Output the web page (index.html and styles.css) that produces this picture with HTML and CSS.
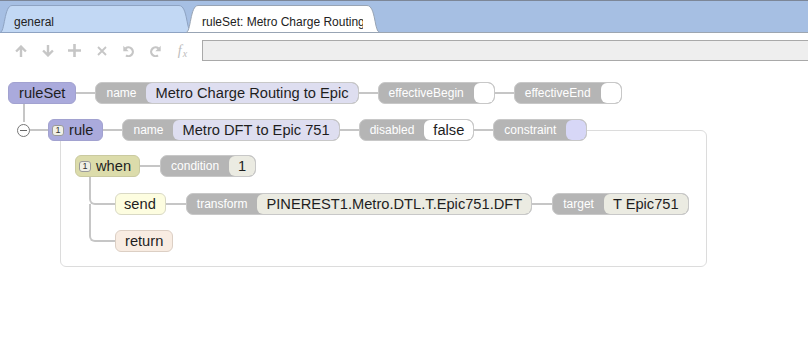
FILE: index.html
```html
<!DOCTYPE html>
<html>
<head>
<meta charset="utf-8">
<link rel="stylesheet" href="styles.css">
</head>
<body>
<div class="tabbar">
  <div class="tab">
    <svg class="tab-bg" viewBox="0 0 192 27" preserveAspectRatio="none"><path d="M0 27.5 C5 27.5 4 0.5 12 0.5 H179 C188 0.5 186 27.5 192 27.5 Z" fill="#c2d8f4" stroke="#8ea3c2" stroke-width="1" vector-effect="non-scaling-stroke"/></svg>
    <span class="tab-text">general</span>
  </div>
  <div class="tab active">
    <svg class="tab-bg" viewBox="0 0 194 27" preserveAspectRatio="none"><path d="M0 27.5 C5 27.5 4 0.5 12 0.5 H181 C190 0.5 188 27.5 194 27.5 Z" fill="#ffffff" stroke="#98a4b4" stroke-width="1" vector-effect="non-scaling-stroke"/></svg>
    <span class="tab-text">ruleSet: Metro Charge Routing to Epic</span>
  </div>
</div>

<div class="toolbar">
  <span class="tool"><svg width="12" height="12" viewBox="0 0 12 12"><path d="M6 12V1.6M1.1 6.5L6 1.6l4.9 4.9" fill="none" stroke="#c6c6c6" stroke-width="2.4"/></svg></span>
  <span class="tool"><svg width="12" height="12" viewBox="0 0 12 12"><path d="M6 0V10.4M1.1 5.5L6 10.4l4.9-4.9" fill="none" stroke="#c6c6c6" stroke-width="2.4"/></svg></span>
  <span class="tool"><svg width="13" height="13" viewBox="0 0 13 13"><path d="M6.5 0v13M0 6.5h13" fill="none" stroke="#c6c6c6" stroke-width="2.6"/></svg></span>
  <span class="tool"><svg width="10" height="10" viewBox="0 0 10 10"><path d="M1 1l8 8M9 1l-8 8" fill="none" stroke="#c6c6c6" stroke-width="1.8"/></svg></span>
  <span class="tool"><svg width="11" height="12" viewBox="0 0 11 12"><path d="M2.6 3.4A4.4 4.4 0 1 1 3 10.4" fill="none" stroke="#c6c6c6" stroke-width="2.2"/><path d="M0.3 0.8V6.2H5.7Z" fill="#c6c6c6"/></svg></span>
  <span class="tool"><svg width="11" height="12" viewBox="0 0 11 12"><g transform="translate(11 0) scale(-1 1)"><path d="M2.6 3.4A4.4 4.4 0 1 1 3 10.4" fill="none" stroke="#c6c6c6" stroke-width="2.2"/><path d="M0.3 0.8V6.2H5.7Z" fill="#c6c6c6"/></g></svg></span>
  <span class="tool fx"><i>f</i><span class="sub">x</span></span>
  <div class="formula"></div>
</div>

<div class="tree">
  <div class="row">
    <div class="node set">ruleSet</div>
    <span class="conn"></span>
    <div class="prop"><span class="lbl">name</span><span class="val lav">Metro Charge Routing to Epic</span></div>
    <span class="conn"></span>
    <div class="prop"><span class="lbl">effectiveBegin</span><span class="val empty"></span></div>
    <span class="conn"></span>
    <div class="prop"><span class="lbl">effectiveEnd</span><span class="val empty"></span></div>
  </div>

  <div class="row rule-row">
    <span class="collapse"></span>
    <span class="conn short"></span>
    <div class="node set badged"><span class="badge">1</span>rule</div>
    <span class="conn"></span>
    <div class="prop"><span class="lbl">name</span><span class="val lav">Metro DFT to Epic 751</span></div>
    <span class="conn"></span>
    <div class="prop"><span class="lbl">disabled</span><span class="val white">false</span></div>
    <span class="conn"></span>
    <div class="prop"><span class="lbl">constraint</span><span class="val empty lav2"></span></div>
  </div>

  <div class="rule-body">
    <div class="row">
      <div class="node when badged"><span class="badge">1</span>when</div>
      <span class="conn wide"></span>
      <div class="prop"><span class="lbl">condition</span><span class="val beige">1</span></div>
    </div>
    <div class="children">
      <div class="row child">
        <div class="node send">send</div>
        <span class="conn wide"></span>
        <div class="prop"><span class="lbl">transform</span><span class="val beige">PINEREST1.Metro.DTL.T.Epic751.DFT</span></div>
        <span class="conn wide"></span>
        <div class="prop"><span class="lbl">target</span><span class="val beige">T Epic751</span></div>
      </div>
      <div class="row child">
        <div class="node ret">return</div>
      </div>
    </div>
  </div>
</div>
</body>
</html>
```

FILE: styles.css
```css
body {
  margin: 0;
  font-family: "Liberation Sans", Arial, sans-serif;
  color: #1e1e1e;
  background: #fff;
}

.tabbar {
  height: 31px;
  border-top: 1px solid #7c8697;
  border-bottom: 1px solid #9da6b1;
  background: #a6bfe3;
  display: flex;
  align-items: flex-end;
}

.tab {
  position: relative;
  box-sizing: border-box;
  width: 192px;
  height: 27px;
  padding: 10px 0 0 14px;
  font-size: 12px;
  line-height: 14px;
  color: #222;
}

.tab.active {
  width: 194px;
  margin-left: -6px;
  padding-left: 16px;
}

.tab-bg {
  position: absolute;
  left: 0;
  top: 0;
  width: 100%;
  height: 100%;
  overflow: visible;
}

.tab-text {
  position: relative;
  display: block;
  white-space: nowrap;
  overflow: hidden;
}

.tab.active .tab-text {
  width: 161px;
}

.toolbar {
  display: flex;
  align-items: center;
  height: 21px;
  padding: 7px 0 0 7px;
}

.tool {
  width: 27px;
  display: flex;
  justify-content: center;
  align-items: center;
}

.fx {
  font-family: "Liberation Serif", "Times New Roman", serif;
  color: #bdbdbd;
  font-size: 14px;
}

.fx .sub {
  font-size: 10px;
  font-style: italic;
  margin-top: 5px;
  margin-left: 1px;
}

.formula {
  flex: 1;
  height: 19px;
  margin-left: 6px;
  border: 1px solid #a9a9a9;
  border-right: 0;
  background: #eeeeee;
}

.tree {
  padding: 21px 0 0 8px;
}

.row {
  display: flex;
  align-items: center;
  height: 22px;
}

.conn {
  flex: none;
  width: 19px;
  height: 2px;
  background: #c6c6c6;
}

.conn.short {
  width: 18px;
}

.conn.wide {
  width: 20px;
}

.node {
  box-sizing: border-box;
  height: 22px;
  border: 1px solid;
  border-radius: 6px;
  display: flex;
  align-items: center;
  padding: 0 10px;
  font-size: 14.667px;
  white-space: nowrap;
}

.node.badged {
  padding: 0 9px 0 3px;
}

.set {
  background: #aaaadc;
  border-color: #a2a2d0;
}

.when {
  background: #dcdcab;
  border-color: #cacaa0;
}

.node.when {
  padding-right: 8px;
}

.send {
  background: #fdfde0;
  border-color: #d9d9c4;
  padding: 0 9px 0 8px;
}

.ret {
  background: #f8ece2;
  border-color: #dccfc4;
  padding: 0 9px;
}

.badge {
  box-sizing: border-box;
  width: 12px;
  height: 11px;
  margin-right: 5px;
  border: 1px solid #9a9a9a;
  border-radius: 3px;
  background: #f1f1e6;
  font-size: 9px;
  line-height: 9px;
  text-align: center;
  color: #333;
}

.prop {
  box-sizing: border-box;
  height: 22px;
  border: 1px solid #c8c8c8;
  border-radius: 7px;
  background: #b5b5b5;
  display: flex;
  align-items: stretch;
  overflow: hidden;
  white-space: nowrap;
}

.lbl {
  color: #fff;
  font-size: 12px;
  padding: 0 10px;
  display: flex;
  align-items: center;
}

.val {
  border-radius: 6px;
  padding: 0 9px;
  font-size: 14.667px;
  display: flex;
  align-items: center;
  color: #1e1e1e;
}

.val.empty {
  width: 20px;
  padding: 0;
  background: #fff;
}

.lav {
  background: #dedef0;
}

.val.lav2 {
  background: #d7d7f7;
}

.white {
  background: #fff;
}

.beige {
  background: #ebebe2;
}

.rule-row {
  position: relative;
  z-index: 1;
  margin: 15px 0 0 9px;
}

.rule-row::before {
  content: "";
  position: absolute;
  left: 6px;
  top: -15px;
  width: 2px;
  height: 18px;
  background: #c6c6c6;
}

.collapse {
  position: relative;
  box-sizing: border-box;
  flex: none;
  width: 13px;
  height: 13px;
  border: 1px solid #777;
  border-radius: 50%;
  background: #fff;
}

.collapse::after {
  content: "";
  position: absolute;
  left: 2px;
  top: 5px;
  width: 7px;
  height: 1px;
  background: #666;
}

.rule-body {
  box-sizing: border-box;
  width: 647px;
  margin: -11px 0 0 52px;
  border: 1px solid #dcdcdc;
  border-radius: 6px;
  padding: 24px 0 14px 14px;
}

.children {
  display: flex;
  flex-direction: column;
  gap: 15px;
  margin-top: 16px;
  padding-left: 40px;
}

.child {
  position: relative;
}

.child::before {
  content: "";
  position: absolute;
  left: -26px;
  width: 24px;
  border-left: 2px solid #c6c6c6;
  border-bottom: 2px solid #c6c6c6;
  border-bottom-left-radius: 6px;
}

.child:first-child::before {
  top: -16px;
  height: 26px;
}

.child + .child::before {
  top: -26px;
  height: 36px;
}
```
